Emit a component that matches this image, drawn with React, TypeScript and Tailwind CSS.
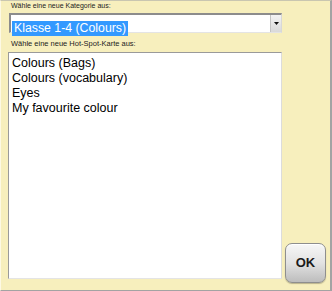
const cards = ['Colours (Bags)', 'Colours (vocabulary)', 'Eyes', 'My favourite colour']

export default function App() {
  return (
    <div
      className="flex h-[291px] w-[332px] border-t border-r-2 border-b border-l border-t-[#c9c6b0] border-r-[#a3a3a3] border-b-[#a3a3a3] border-l-[#fdf9e4] bg-[#f7efbd]"
      style={{ fontFamily: '"Liberation Sans", Arial, sans-serif' }}
    >
      <div className="flex flex-col pl-[7px]">
        <div className="ml-[3px] h-[10px] text-[7px] leading-[10px] text-[#222]">Wähle eine neue Kategorie aus:</div>
        <div className="mt-[2px] ml-[1px] flex h-[20px] w-[273px] border-t-2 border-l-2 border-r border-b border-t-[#8c8c8c] border-l-[#8c8c8c] border-r-[#d8d8d8] border-b-[#e4e4e4] bg-white">
          <div className="flex-1 pl-[1px]">
            <span className="inline-block bg-[#3399ff] px-[2px] text-[12.3px] leading-[15px] text-white">Klasse 1-4 (Colours)</span>
          </div>
          <div className="flex w-[11px] items-center justify-center border-l border-[#c4c4c4] bg-gradient-to-b from-[#f4f4f4] to-[#d9d9d9]">
            <svg width="5" height="3" viewBox="0 0 5 3">
              <path d="M0 0h5L2.5 3z" fill="#111" />
            </svg>
          </div>
        </div>
        <div className="mt-[6px] ml-[3px] h-[10px] text-[7.5px] leading-[10px] text-[#222]">Wähle eine neue Hot-Spot-Karte aus:</div>
        <div className="mt-[3px] h-[227px] w-[274px] border-t border-l border-r border-b border-t-[#9a9a9a] border-l-[#9a9a9a] border-r-[#dcdcdc] border-b-[#e4e4e4] bg-white pt-[3px] pl-[3px]">
          {cards.map((c) => (
            <div key={c} className="text-[12.5px] leading-[15px] text-black">
              {c}
            </div>
          ))}
        </div>
      </div>
      <div className="flex flex-1 flex-col justify-end pb-[7px] pl-[3px]">
        <button className="flex h-[40px] w-[41px] items-center justify-center rounded-[7px] border border-[#8e8e8e] bg-gradient-to-b from-[#f7f7f7] via-[#e2e2e2] to-[#bdbdbd] text-[13px] font-bold text-[#1a1a1a] shadow-[inset_0_1px_0_#fff,0_1px_1px_rgba(0,0,0,0.25)]">
          OK
        </button>
      </div>
    </div>
  )
}
